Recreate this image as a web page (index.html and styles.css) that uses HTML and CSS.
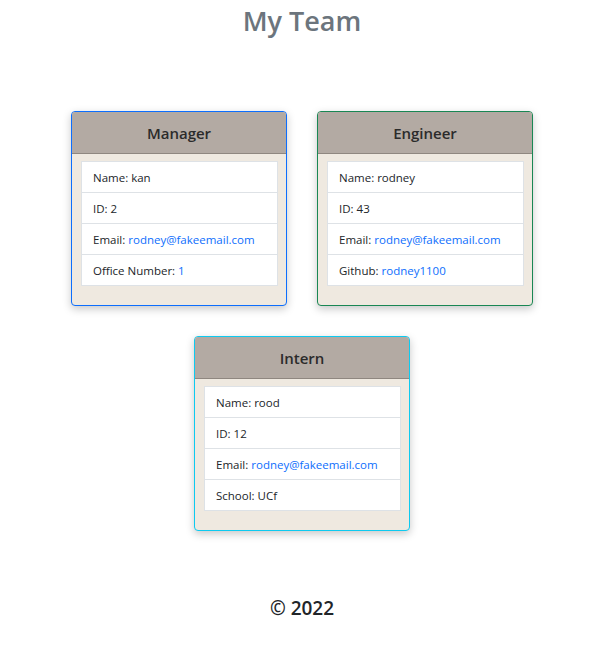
FILE: index.html
```html
<!DOCTYPE html>
<html lang="en">
<head>
<meta charset="utf-8">
<title>My Team</title>
<link rel="stylesheet" href="styles.css">
</head>
<body>
<div class="page">
  <header class="top">
    <h1 class="title">My Team</h1>
  </header>
  <main class="team">
    <div class="card border-primary">
      <div class="card-header">Manager</div>
      <div class="card-body">
        <ul class="list">
          <li>Name: kan</li>
          <li>ID: 2</li>
          <li>Email: <a href="#">rodney@fakeemail.com</a></li>
          <li>Office Number: <a href="#">1</a></li>
        </ul>
      </div>
    </div>
    <div class="card border-success">
      <div class="card-header">Engineer</div>
      <div class="card-body">
        <ul class="list">
          <li>Name: rodney</li>
          <li>ID: 43</li>
          <li>Email: <a href="#">rodney@fakeemail.com</a></li>
          <li>Github: <a href="#">rodney1100</a></li>
        </ul>
      </div>
    </div>
    <div class="card border-info">
      <div class="card-header">Intern</div>
      <div class="card-body">
        <ul class="list">
          <li>Name: rood</li>
          <li>ID: 12</li>
          <li>Email: <a href="#">rodney@fakeemail.com</a></li>
          <li>School: UCf</li>
        </ul>
      </div>
    </div>
  </main>
  <footer class="foot">© 2022</footer>
</div>
</body>
</html>
```
FILE: styles.css
```css
* { box-sizing: border-box; }
html, body { margin: 0; padding: 0; background: #fff; }
body {
  font-family: "Open Sans", "Noto Sans", "Liberation Sans", sans-serif;
  color: #212529;
}
.page {
  margin-left: 15px;
  display: flex;
  flex-direction: column;
  align-items: center;
}
.top { padding-top: 3px; }
.title {
  margin: 0;
  font-size: 27px;
  font-weight: 600;
  color: #6c757d;
  line-height: 36px;
}
.team {
  margin-top: 72px;
  width: 462px;
  display: flex;
  flex-wrap: wrap;
  justify-content: center;
  column-gap: 30px;
  row-gap: 30px;
}
.card {
  width: 216px;
  border: 1px solid;
  border-radius: 4px;
  background: #efe9e0;
  box-shadow: 0 3px 8px rgba(0,0,0,0.22);
  overflow: hidden;
}
.border-primary { border-color: #0d6efd; }
.border-success { border-color: #198754; }
.border-info { border-color: #0dcaf0; }
.card-header {
  height: 42px;
  background: #b3aaa3;
  border-bottom: 1px solid #8f8780;
  display: flex;
  align-items: center;
  justify-content: center;
  font-size: 15px;
  font-weight: 600;
  color: #2b2b2b;
}
.card-body { padding: 7px 8px 19px 9px; }
.list {
  list-style: none;
  margin: 0;
  padding: 0;
  background: #fff;
  border: 1px solid #dee2e6;
}
.list li {
  height: 31px;
  padding: 0 11px;
  display: flex;
  align-items: center;
  font-size: 11.5px;
  color: #212529;
  border-top: 1px solid #dee2e6;
}
.list li:first-child { border-top: none; height: 30px; }
.list a { color: #0d6efd; text-decoration: none; margin-left: 3px; }
.foot {
  margin-top: 64px;
  font-size: 19px;
  font-weight: 600;
  color: #212529;
  line-height: 26px;
}
```
